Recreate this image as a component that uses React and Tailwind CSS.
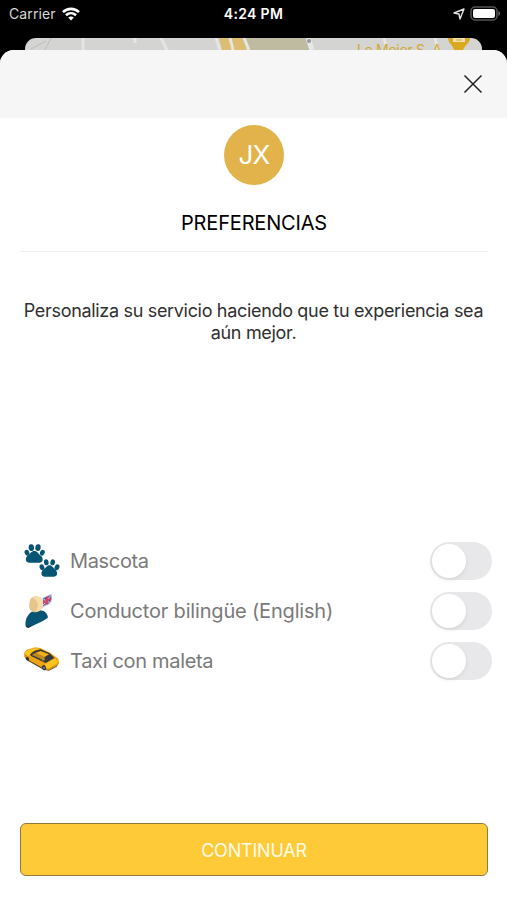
import React, { useState } from 'react';

const PawsIcon = () => (
    <svg width="55" height="50" viewBox="0 0 165 150" fill="#075574">
        <path d="M58 48c9 0 12 8 18 13 10 7 10 22-2 22H42c-12 0-12-16-3-22 7-5 10-13 19-13Z" />
        <ellipse cx="36" cy="53" rx="7" ry="9" transform="rotate(-22 36 53)" />
        <ellipse cx="49" cy="38" rx="8" ry="10" transform="rotate(-6 49 38)" />
        <ellipse cx="69" cy="38" rx="8" ry="10" transform="rotate(8 69 38)" />
        <ellipse cx="82" cy="53" rx="7" ry="9" transform="rotate(22 82 53)" />
        <path d="M103 91c9 0 11 8 17 12 9 7 9 22-3 22H88c-10 0-12-15-2-22 7-4 9-12 17-12Z" />
        <ellipse cx="81" cy="97" rx="7" ry="9" transform="rotate(-22 81 97)" />
        <ellipse cx="94" cy="82" rx="7" ry="9" transform="rotate(-8 94 82)" />
        <ellipse cx="113" cy="82" rx="7" ry="9" transform="rotate(14 113 82)" />
        <ellipse cx="126" cy="97" rx="7" ry="9" transform="rotate(24 126 97)" />
    </svg>
);

const DriverIcon = () => (
    <svg width="55" height="50" viewBox="0 0 165 150">
        <path d="M32 124c-3-17 4-32 16-42 10-6 26-8 38-4 8 5 14 14 12 21L82 109l-41 19c-4 1-8-1-9-4Z" fill="#075574" />
        <path d="M33 122l7 2 9-4v4l-9 4-6-2Z" fill="#123b53" />
        <rect x="43" y="34" width="37" height="48" rx="18" fill="#e5c58c" transform="rotate(7 62 58)" />
        <path d="M52 38c8-7 24-6 30 3 5 11 2 29-8 36-3 2-8 3-12 1 11-13 9-31-10-40Z" fill="#f6dcab" />
        <path d="M83 38l27-12c3 10 1 22-4 30L86 66l-6 5 4-12Z" fill="#cec8dd" />
        <path d="M85 40l23-10c2 9 0 17-4 24L84 63Z" fill="#5b5a9b" />
        <path d="M86 43l19 10M107 32L85 60" stroke="#e9d5e1" strokeWidth="3" />
        <path d="M85 53l23-12M97 35l-2 23" stroke="#d94268" strokeWidth="6" />
    </svg>
);

const TaxiIcon = () => (
    <svg width="55" height="50" viewBox="0 0 165 150">
        <path d="M28 63l6 12 52 29 16 3 23-12 6-10Z" fill="#4b4028" />
        <path d="M27 54l8-10 26-7 15 2 30 14 24 18 2 13-8 10-22 11-12-2-50-28-12-11Z" fill="#eea315" />
        <path d="M28 54l10-8 23-6 11 3-20 6-8 11-5 4Z" fill="#ffc51d" />
        <path d="M90 88l29-17 11 7-7 10-21 12-13-3Z" fill="#ffc31f" />
        <path d="M45 58l14-11 18-4 27 12 14 13-26 16-44-21Z" fill="#34393a" />
        <path d="M60 54l17-6 25 10-14 9Z" fill="#f5ad19" />
        <path d="M52 59l8-5 28 13 2 8-6 2-32-15Z" fill="#c28b20" />
        <path d="M54 61l28 13-3 2-27-13ZM91 73l17-11 9 7-23 13Z" fill="#303a40" />
        <ellipse cx="38" cy="71" rx="4" ry="6" fill="#303638" transform="rotate(-25 38 71)" />
        <ellipse cx="87" cy="98" rx="6" ry="8" fill="#303638" transform="rotate(-18 87 98)" />
        <ellipse cx="87" cy="98" rx="2" ry="3" fill="#bcc1bd" />
        <path d="M29 60l12 7M105 101l20-10" stroke="#bd7b0d" strokeWidth="2" />
    </svg>
);

const preferences = [
    { id: 'pet', label: 'Mascota', Icon: PawsIcon, text: 'tracking-[-0.35px]' },
    { id: 'english', label: 'Conductor bilingüe (English)', Icon: DriverIcon, text: 'tracking-[-0.18px]' },
    { id: 'luggage', label: 'Taxi con maleta', Icon: TaxiIcon, text: 'tracking-[-0.32px]' },
];

function StatusBar() {
    return (
        <div className="h-[38px] px-[9px] grid grid-cols-3 text-white">
            <div className="flex h-[27px] items-center gap-[6px]">
                <span className="text-[14px] tracking-[0.1px] text-[#d8d8d8]">Carrier</span>
                <svg width="18" height="14" viewBox="0 0 18 14" fill="none" stroke="#fff" strokeWidth="2.6">
                    <path d="M1 5.1C5.4.8 12.6.8 17 5.1" />
                    <path d="M4 8.3c2.9-2.7 7.1-2.7 10 0" />
                    <path d="M6.2 10.6c1.7-1.4 3.9-1.4 5.6 0L9 13.6Z" fill="#fff" stroke="none" />
                </svg>
            </div>
            <div className="flex h-[27px] items-center justify-center text-[14px] font-semibold tracking-[0.35px]">4:24 PM</div>
            <div className="flex h-[27px] items-center justify-end gap-[5px] -mr-[3px]">
                <svg width="12" height="12" viewBox="0 0 12 12" fill="none" stroke="#e2e2e2" strokeWidth="1.4" strokeLinejoin="round">
                    <path d="M11 1L7 11l-1-5-5-1Z" />
                </svg>
                <svg width="31" height="15" viewBox="0 0 31 15">
                    <rect x="1" y="1" width="26" height="13" rx="4" fill="#000" stroke="#555" strokeWidth="1.5" />
                    <rect x="3" y="3" width="22" height="9" rx="2" fill="#fff" />
                    <path d="M28.5 5v5c2-1 2-4 0-5Z" fill="#777" />
                </svg>
            </div>
        </div>
    );
}

function MapStrip() {
    return (
        <div className="relative mx-[25px] h-3 overflow-hidden rounded-t-[11px] bg-[#d4d4d2]">
            <svg className="block" width="457" height="12" viewBox="0 0 457 12">
                <path d="M221 0h60l4 12h-61Z" fill="#bebba0" />
                <path d="M194 0h24l4 12h-25Z" fill="#ddbd72" />
                <path d="M191 0l4 12M205 0l3 12M219 0l5 12M58 0v12M110 0v5M136 0l6 12M359 0l3 12M410 0l3 12" stroke="#e5e5e3" strokeWidth="3" />
                <path d="M26 0l-6 12M6 11L21 3" stroke="#bcbcba" />
                <path d="M283 0l4 12" stroke="#e7e7e7" strokeWidth="5" />
                <circle cx="284" cy="3" r="2" fill="#999" />
                <path d="M423 0h22c0 5-5 7-7 12h-9c-1-5-6-7-6-12Z" fill="#dba91e" />
                <path d="M428 0h12v4h-12Z" fill="#eee0b8" />
                <path d="M431 2h6" stroke="#dba91e" />
            </svg>
            <span className="absolute left-[332px] top-[4px] whitespace-nowrap text-[14px] leading-4 tracking-[-0.3px] text-[#d3a831]">Le Mejor S. A.</span>
        </div>
    );
}

export default function App() {

    const [selected, setSelected] = useState({});

    const toggle = (id) => setSelected((prev) => ({ ...prev, [id]: !prev[id] }));

    return (
        <div className="flex h-[900px] w-[507px] flex-col overflow-hidden bg-black font-['Inter','Liberation_Sans',sans-serif]">
            <StatusBar />
            <MapStrip />

            <div className="flex flex-1 flex-col overflow-hidden rounded-t-[14px] bg-white">
                {/* Sheet header */}
                <div className="flex h-[68px] items-center justify-end bg-[#f6f6f6] pr-[24px]">
                    <button type="button" aria-label="Cerrar" onClick={() => setSelected({})}>
                        <svg width="20" height="20" viewBox="0 0 20 20" fill="none" stroke="#202020" strokeWidth="1.5">
                            <path d="M1.5 1.5l17 17M18.5 1.5l-17 17" />
                        </svg>
                    </button>
                </div>

                <div className="ml-5 mr-[19px] flex h-[134px] flex-col items-center border-b border-[#f0f0f0] pt-[7px]">
                    <div className="flex size-[60px] items-center justify-center rounded-full bg-[#e2b34b] pb-px text-[26px] tracking-[-0.8px] text-white">
                        JX
                    </div>
                    <h1 className="mt-[24px] text-[20px] leading-7 tracking-[-0.17px] text-black">PREFERENCIAS</h1>
                </div>

                <p className="mt-[48px] text-center text-[18px] leading-[21.5px] tracking-[-0.32px] text-[#303030]">
                    Personaliza su servicio haciendo que tu experiencia sea
                    <br />
                    aún mejor.
                </p>

                {/* Preferences */}
                <div className="mt-[192px] pl-[15px] pr-[15px]">
                    {preferences.map(({ id, label, Icon, text }) => (
                        <div key={id} className="flex h-[50px] items-center">
                            <Icon />
                            <span className={`flex-1 pt-[2px] text-[20px] text-[#7a7a7a] ${text}`}>{label}</span>
                            <button
                                type="button"
                                role="switch"
                                aria-label={label}
                                aria-checked={!!selected[id]}
                                onClick={() => toggle(id)}
                                className={`mt-[2px] flex h-[38px] w-[62px] items-center rounded-full p-[2px] ${selected[id] ? 'justify-end bg-[#ffca38]' : 'bg-[#e8e8ea]'}`}
                            >
                                <span className="size-[34px] rounded-full bg-white shadow-[0_2px_4px_rgba(0,0,0,0.08)]" />
                            </button>
                        </div>
                    ))}
                </div>

                <button
                    type="button"
                    className="ml-5 mr-[19px] mt-auto mb-[24px] h-[53px] rounded-[6px] border border-[#94793a] bg-[#ffca38] pt-px text-[18px] tracking-[-0.2px] text-[#fffbe8]"
                >
                    CONTINUAR
                </button>
            </div>
        </div>
    );
}
